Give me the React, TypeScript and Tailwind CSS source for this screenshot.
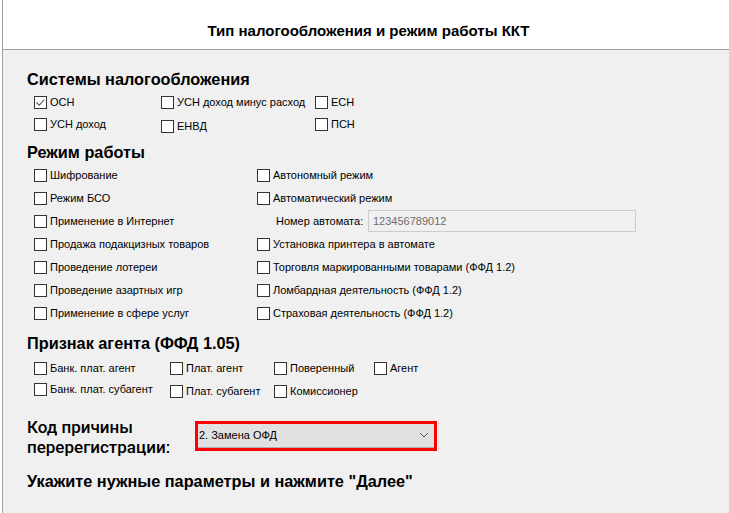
import React from "react";

const ui = { fontFamily: '"Liberation Sans", Arial, sans-serif' };

function Box({ checked = false }: { checked?: boolean }) {
  return (
    <span className="inline-flex h-[13px] w-[13px] shrink-0 items-center justify-center border border-[#333333] bg-white">
      {checked && (
        <svg width="11" height="11" viewBox="0 0 11 11">
          <path d="M1.5 5.5 L4.2 8.2 L9.5 2.5" fill="none" stroke="#5a5a5a" strokeWidth="1.1" />
        </svg>
      )}
    </span>
  );
}

function Check({ label, checked, className = "" }: { label: string; checked?: boolean; className?: string }) {
  return (
    <div className={`flex items-center gap-[3px] text-[11px] leading-none text-black ${className}`}>
      <Box checked={checked} />
      <span className="whitespace-nowrap">{label}</span>
    </div>
  );
}

function Heading({ children, className = "" }: { children: React.ReactNode; className?: string }) {
  return <h2 className={`text-[16.3px] font-bold leading-none text-black ${className}`}>{children}</h2>;
}

const modesLeft = [
  "Шифрование",
  "Режим БСО",
  "Применение в Интернет",
  "Продажа подакцизных товаров",
  "Проведение лотереи",
  "Проведение азартных игр",
  "Применение в сфере услуг",
];

const modesRight = [
  "Установка принтера в автомате",
  "Торговля маркированными товарами (ФФД 1.2)",
  "Ломбардная деятельность (ФФД 1.2)",
  "Страховая деятельность (ФФД 1.2)",
];

export default function App() {
  return (
    <div className="flex h-[513px] w-[729px] overflow-hidden bg-[#f0f0f0]" style={ui}>
      {/* edge of the window behind */}
      <div className="w-[2px] shrink-0 bg-white" />
      <div className="w-[1px] shrink-0 bg-[#a0a0a0]" />

      <div className="flex min-w-0 flex-1 flex-col">
        <header className="flex h-[50px] shrink-0 items-end justify-center border-b border-[#a0a0a0] bg-white pb-[11px] pl-[5px]">
          <h1 className="text-[15px] font-bold leading-none text-black">
            Тип налогообложения и режим работы ККТ
          </h1>
        </header>

        <main className="flex flex-col pl-[24px] pt-[21px]">
          {/* Системы налогообложения */}
          <Heading>Системы налогообложения</Heading>
          <div className="mt-[9px] grid grid-cols-[127px_154px_auto] gap-y-[9px] pl-[7px]">
            <Check label="ОСН" checked />
            <Check label="УСН доход минус расход" />
            <Check label="ЕСН" />
            <Check label="УСН доход" />
            <Check label="ЕНВД" className="translate-y-[2px]" />
            <Check label="ПСН" />
          </div>

          {/* Режим работы */}
          <Heading className="mt-[13px]">Режим работы</Heading>
          <div className="mt-[3px] flex pl-[7px]">
            <div className="flex w-[223px] flex-col">
              {modesLeft.map((m) => (
                <div key={m} className="flex h-[23px] items-center">
                  <Check label={m} />
                </div>
              ))}
            </div>
            <div className="flex flex-col">
              <div className="flex h-[23px] items-center">
                <Check label="Автономный режим" />
              </div>
              <div className="flex h-[23px] items-center">
                <Check label="Автоматический режим" />
              </div>
              <div className="flex h-[23px] items-center pl-[19px] text-[11px] leading-none">
                <span className="w-[92px]">Номер автомата:</span>
                <div className="flex h-[22px] w-[268px] items-center border border-[#cccccc] bg-[#f0f0f0] px-[4px] text-[#6d6d6d]">
                  123456789012
                </div>
              </div>
              {modesRight.map((m) => (
                <div key={m} className="flex h-[23px] items-center">
                  <Check label={m} />
                </div>
              ))}
            </div>
          </div>

          {/* Признак агента */}
          <Heading className="mt-[10px]">Признак агента (ФФД 1.05)</Heading>
          <div className="mt-[11px] grid grid-cols-[136px_104px_100px_auto] gap-y-[9px] pl-[7px]">
            <Check label="Банк. плат. агент" />
            <Check label="Плат. агент" />
            <Check label="Поверенный" />
            <Check label="Агент" />
            <Check label="Банк. плат. субагент" className="-translate-y-[1px]" />
            <Check label="Плат. субагент" className="translate-y-[1px]" />
            <Check label="Комиссионер" className="translate-y-[1px]" />
          </div>

          {/* Код причины */}
          <div className="mt-[20px] flex items-start">
            <div
              className="flex w-[168px] flex-col text-[17px] font-medium leading-[20px] text-black"
              style={{ fontFamily: 'Roboto, "Liberation Sans", sans-serif' }}
            >
              <span>Код причины</span>
              <span>перерегистрации:</span>
            </div>
            <div className="mt-[4px] border-[3px] border-[#ff0000]">
              <div className="flex h-[24px] w-[236px] items-center justify-between border-b border-[#b0b0b0] bg-[#e1e1e1] pl-[1px] pr-[5px] text-[11px] text-black">
                <span>2. Замена ОФД</span>
                <svg width="10" height="6" viewBox="0 0 10 6">
                  <path d="M1 1 L5 5 L9 1" fill="none" stroke="#555" strokeWidth="1" />
                </svg>
              </div>
            </div>
          </div>

          <Heading className="mt-[16px]">Укажите нужные параметры и нажмите "Далее"</Heading>
        </main>
      </div>
    </div>
  );
}
